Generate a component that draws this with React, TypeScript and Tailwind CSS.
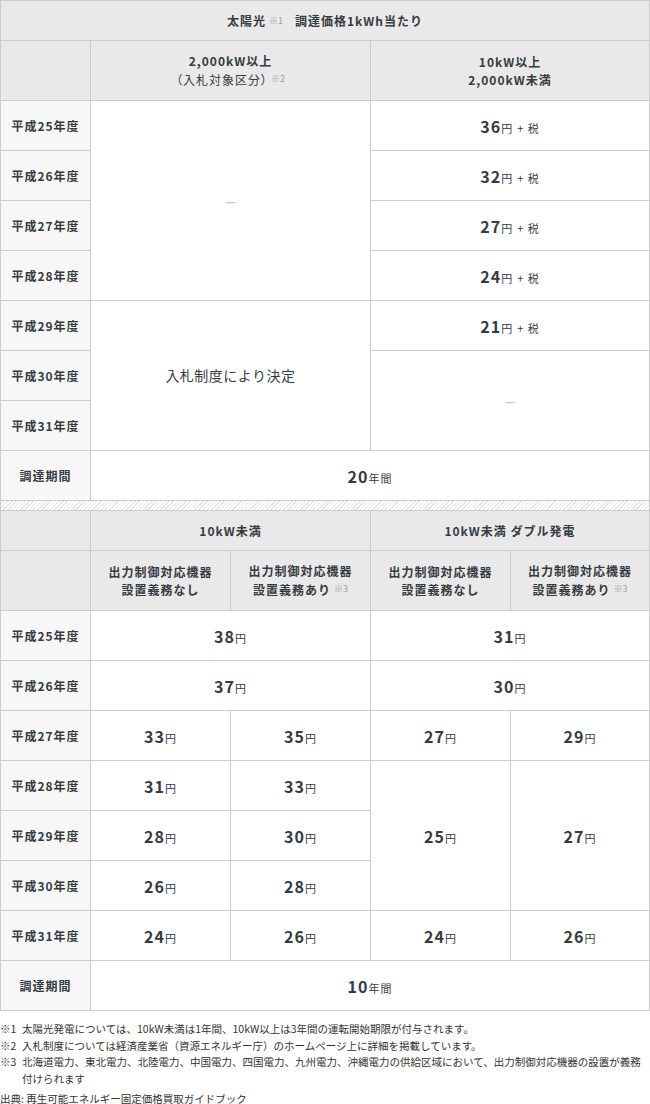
import React from "react";

const base =
  "flex items-center justify-center text-center border-r border-b border-[#cccccc]";
const hd = `${base} bg-[#e9e9e9] font-bold text-[12px] leading-[18px] tracking-[1px]`;
const lb = `${base} bg-[#f7f7f7] font-bold text-[12px] tracking-[1px]`;
const dt = `${base} bg-white`;

function Sup({ children }: { children: React.ReactNode }) {
  return (
    <span className="ml-[3px] text-[9px] font-normal tracking-normal text-[#a0a0a0] align-[3px]">
      {children}
    </span>
  );
}

function Price({ n, tax = false }: { n: string; tax?: boolean }) {
  return (
    <span className="whitespace-nowrap tracking-[1px]">
      <span className="text-[16px] font-bold">{n}</span>
      <span className="text-[11px]">円</span>
      {tax ? <span className="ml-[4px] text-[11px]">+ 税</span> : null}
    </span>
  );
}

function Dash() {
  return <span className="text-[12px] font-bold text-[#c8c8c8]">—</span>;
}

export default function App() {
  return (
    <div className="w-[650px] bg-white font-['Noto_Sans_CJK_JP','Noto_Sans',sans-serif] text-[#353b42]">
      <div className="grid w-[650px] grid-cols-[90px_140px_140px_140px_1fr] grid-rows-[40px_60px_repeat(8,50px)_10px_40px_60px_repeat(8,50px)] border-l border-t border-[#cccccc]">
        {/* Table 1 */}
        <div className={`${hd} col-span-5`}>
          <span>太陽光</span>
          <Sup>※1</Sup>
          <span className="ml-3">調達価格1kWh当たり</span>
        </div>
        <div className={hd}></div>
        <div className={`${hd} col-span-2 flex-col`}>
          <span>2,000kW以上</span>
          <span className="font-normal [font-feature-settings:'palt']">
            （入札対象区分）<Sup>※2</Sup>
          </span>
        </div>
        <div className={`${hd} col-span-2 flex-col`}>
          <span>10kW以上</span>
          <span>2,000kW未満</span>
        </div>

        <div className={lb}>平成25年度</div>
        <div className={`${dt} col-span-2 row-span-4`}>
          <Dash />
        </div>
        <div className={`${dt} col-span-2`}>
          <Price n="36" tax />
        </div>
        <div className={lb}>平成26年度</div>
        <div className={`${dt} col-span-2`}>
          <Price n="32" tax />
        </div>
        <div className={lb}>平成27年度</div>
        <div className={`${dt} col-span-2`}>
          <Price n="27" tax />
        </div>
        <div className={lb}>平成28年度</div>
        <div className={`${dt} col-span-2`}>
          <Price n="24" tax />
        </div>

        <div className={lb}>平成29年度</div>
        <div className={`${dt} col-span-2 row-span-3 text-[14px] tracking-[0.5px]`}>
          入札制度により決定
        </div>
        <div className={`${dt} col-span-2`}>
          <Price n="21" tax />
        </div>
        <div className={lb}>平成30年度</div>
        <div className={`${dt} col-span-2 row-span-2`}>
          <Dash />
        </div>
        <div className={lb}>平成31年度</div>

        <div className={lb}>調達期間</div>
        <div className={`${dt} col-span-4`}>
          <span className="whitespace-nowrap tracking-[1px]">
            <span className="text-[16px] font-bold">20</span>
            <span className="text-[11px]">年間</span>
          </span>
        </div>

        {/* separator */}
        <div className="col-span-5 border-r border-b border-[#cccccc] bg-[image:repeating-linear-gradient(-45deg,#e4e4e4_0px,#e4e4e4_1px,#ffffff_1px,#ffffff_3px)]"></div>

        {/* Table 2 */}
        <div className={hd}></div>
        <div className={`${hd} col-span-2`}>10kW未満</div>
        <div className={`${hd} col-span-2`}>10kW未満 ダブル発電</div>

        <div className={hd}></div>
        <div className={`${hd} flex-col`}>
          <span>出力制御対応機器</span>
          <span>設置義務なし</span>
        </div>
        <div className={`${hd} flex-col`}>
          <span>出力制御対応機器</span>
          <span>
            設置義務あり<Sup>※3</Sup>
          </span>
        </div>
        <div className={`${hd} flex-col`}>
          <span>出力制御対応機器</span>
          <span>設置義務なし</span>
        </div>
        <div className={`${hd} flex-col`}>
          <span>出力制御対応機器</span>
          <span>
            設置義務あり<Sup>※3</Sup>
          </span>
        </div>

        <div className={lb}>平成25年度</div>
        <div className={`${dt} col-span-2`}>
          <Price n="38" />
        </div>
        <div className={`${dt} col-span-2`}>
          <Price n="31" />
        </div>

        <div className={lb}>平成26年度</div>
        <div className={`${dt} col-span-2`}>
          <Price n="37" />
        </div>
        <div className={`${dt} col-span-2`}>
          <Price n="30" />
        </div>

        <div className={lb}>平成27年度</div>
        <div className={dt}>
          <Price n="33" />
        </div>
        <div className={dt}>
          <Price n="35" />
        </div>
        <div className={dt}>
          <Price n="27" />
        </div>
        <div className={dt}>
          <Price n="29" />
        </div>

        <div className={lb}>平成28年度</div>
        <div className={dt}>
          <Price n="31" />
        </div>
        <div className={dt}>
          <Price n="33" />
        </div>
        <div className={`${dt} row-span-3`}>
          <Price n="25" />
        </div>
        <div className={`${dt} row-span-3`}>
          <Price n="27" />
        </div>

        <div className={lb}>平成29年度</div>
        <div className={dt}>
          <Price n="28" />
        </div>
        <div className={dt}>
          <Price n="30" />
        </div>

        <div className={lb}>平成30年度</div>
        <div className={dt}>
          <Price n="26" />
        </div>
        <div className={dt}>
          <Price n="28" />
        </div>

        <div className={lb}>平成31年度</div>
        <div className={dt}>
          <Price n="24" />
        </div>
        <div className={dt}>
          <Price n="26" />
        </div>
        <div className={dt}>
          <Price n="24" />
        </div>
        <div className={dt}>
          <Price n="26" />
        </div>

        <div className={lb}>調達期間</div>
        <div className={`${dt} col-span-4`}>
          <span className="whitespace-nowrap tracking-[1px]">
            <span className="text-[16px] font-bold">10</span>
            <span className="text-[11px]">年間</span>
          </span>
        </div>
      </div>

      {/* Notes */}
      <div className="mt-[10px] text-[10.5px] leading-[16.5px] text-[#333333]">
        <div className="flex">
          <span className="w-[22px] shrink-0">※1</span>
          <span>太陽光発電については、10kW未満は1年間、10kW以上は3年間の運転開始期限が付与されます。</span>
        </div>
        <div className="flex">
          <span className="w-[22px] shrink-0">※2</span>
          <span>入札制度については経済産業省（資源エネルギー庁）のホームページ上に詳細を掲載しています。</span>
        </div>
        <div className="flex">
          <span className="w-[22px] shrink-0">※3</span>
          <span>
            北海道電力、東北電力、北陸電力、中国電力、四国電力、九州電力、沖縄電力の供給区域において、出力制御対応機器の設置が義務付けられます
          </span>
        </div>
        <div className="mt-[5px] leading-[13px]">出典: 再生可能エネルギー固定価格買取ガイドブック</div>
      </div>
    </div>
  );
}
